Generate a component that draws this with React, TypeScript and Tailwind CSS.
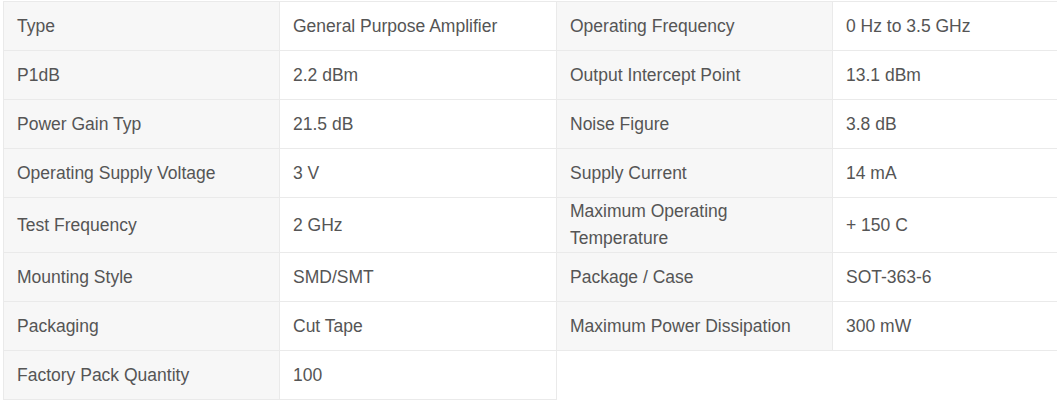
const rows: [string, string, string?, string?][] = [
  ["Type", "General Purpose Amplifier", "Operating Frequency", "0 Hz to 3.5 GHz"],
  ["P1dB", "2.2 dBm", "Output Intercept Point", "13.1 dBm"],
  ["Power Gain Typ", "21.5 dB", "Noise Figure", "3.8 dB"],
  ["Operating Supply Voltage", "3 V", "Supply Current", "14 mA"],
  ["Test Frequency", "2 GHz", "Maximum Operating Temperature", "+ 150 C"],
  ["Mounting Style", "SMD/SMT", "Package / Case", "SOT-363-6"],
  ["Packaging", "Cut Tape", "Maximum Power Dissipation", "300 mW"],
  ["Factory Pack Quantity", "100"],
];

export default function App() {
  return (
    <div className="w-[1057px] h-[404px] overflow-hidden bg-white pl-[3px] pt-[1px] font-['Liberation_Sans',Arial,sans-serif] text-[17.5px] text-[#555]">
      <table className="table-fixed border-collapse w-[1106px]">
        <colgroup>
          <col className="w-[276px]" />
          <col className="w-[277px]" />
          <col className="w-[276px]" />
          <col className="w-[277px]" />
        </colgroup>
        <tbody>
          {rows.map((r, i) => (
            <tr key={i}>
              <td className="h-[49px] px-[13px] py-0 leading-[27px] align-middle border border-[#eaeaea] bg-[#f7f7f7]">{r[0]}</td>
              <td className="h-[49px] px-[13px] py-0 leading-[27px] align-middle border border-[#eaeaea] bg-white">{r[1]}</td>
              {r[2] && (
                <>
                  <td className="h-[49px] px-[13px] py-0 leading-[27px] align-middle border border-[#eaeaea] bg-[#f7f7f7]">{r[2]}</td>
                  <td className="h-[49px] px-[13px] py-0 leading-[27px] align-middle border border-[#eaeaea] bg-white">{r[3]}</td>
                </>
              )}
            </tr>
          ))}
        </tbody>
      </table>
    </div>
  );
}
